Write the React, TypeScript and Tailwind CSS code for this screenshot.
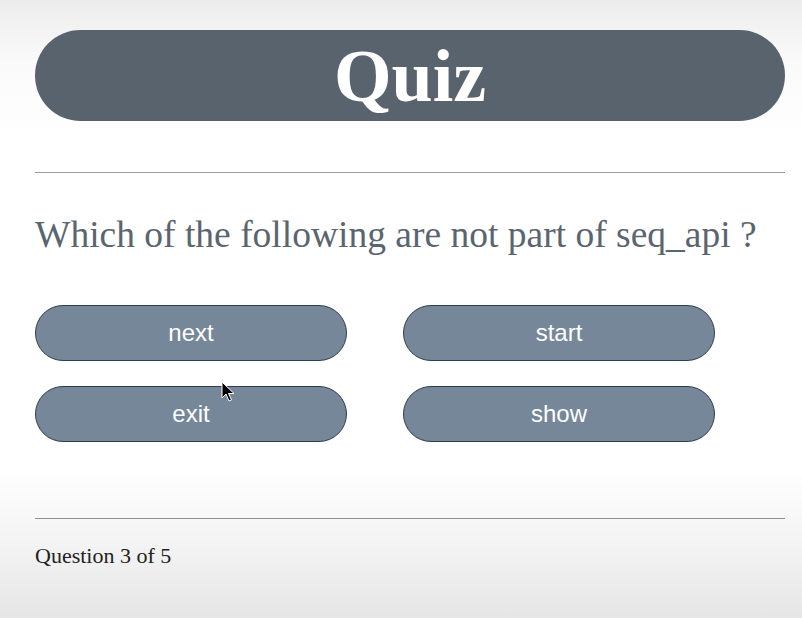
import React from "react";

export default function App() {
  const opts = ["next", "start", "exit", "show"];
  return (
    <div
      className="relative min-h-[618px] w-full px-[35px] pt-[30px] bg-[linear-gradient(to_bottom,#ececec_0px,#fafafa_60px,#ffffff_140px,#ffffff_470px,#f4f4f4_540px,#e6e6e6_618px)]"
      style={{ fontFamily: '"Liberation Serif", "Times New Roman", serif' }}
    >
      <div className="flex h-[91px] w-[750px] items-center justify-center rounded-full bg-[#59636d]">
        <span className="text-[74px] font-bold leading-none text-white">Quiz</span>
      </div>
      <div className="mt-[51px] h-px w-[750px] bg-[#9a9a9a]" />
      <div className="mt-[42px] text-[37.5px] leading-[40px] text-[#5b6570]">
        Which of the following are not part of seq_api ?
      </div>
      <div className="mt-[50px] grid w-[680px] grid-cols-[312px_312px] gap-x-[56px] gap-y-[25px]">
        {opts.map((o) => (
          <button
            key={o}
            className="flex h-[56px] items-center justify-center rounded-full border border-[#2e3d4d] bg-[#76879a] text-[24px] text-white"
            style={{ fontFamily: '"Liberation Sans", Arial, sans-serif' }}
          >
            {o}
          </button>
        ))}
      </div>
      <div className="mt-[76px] h-px w-[750px] bg-[#8f8f8f]" />
      <div className="mt-[20px] text-[22px] text-[#222]">Question 3 of 5</div>
      <svg
        className="absolute left-[221px] top-[381px]"
        width="14"
        height="22"
        viewBox="0 0 14 22"
      >
        <path d="M1 1 L1 17 L5 13 L8 20 L10.5 19 L7.5 12.5 L13 12.5 Z" fill="#000" stroke="#fff" strokeWidth="1" />
      </svg>
    </div>
  );
}
